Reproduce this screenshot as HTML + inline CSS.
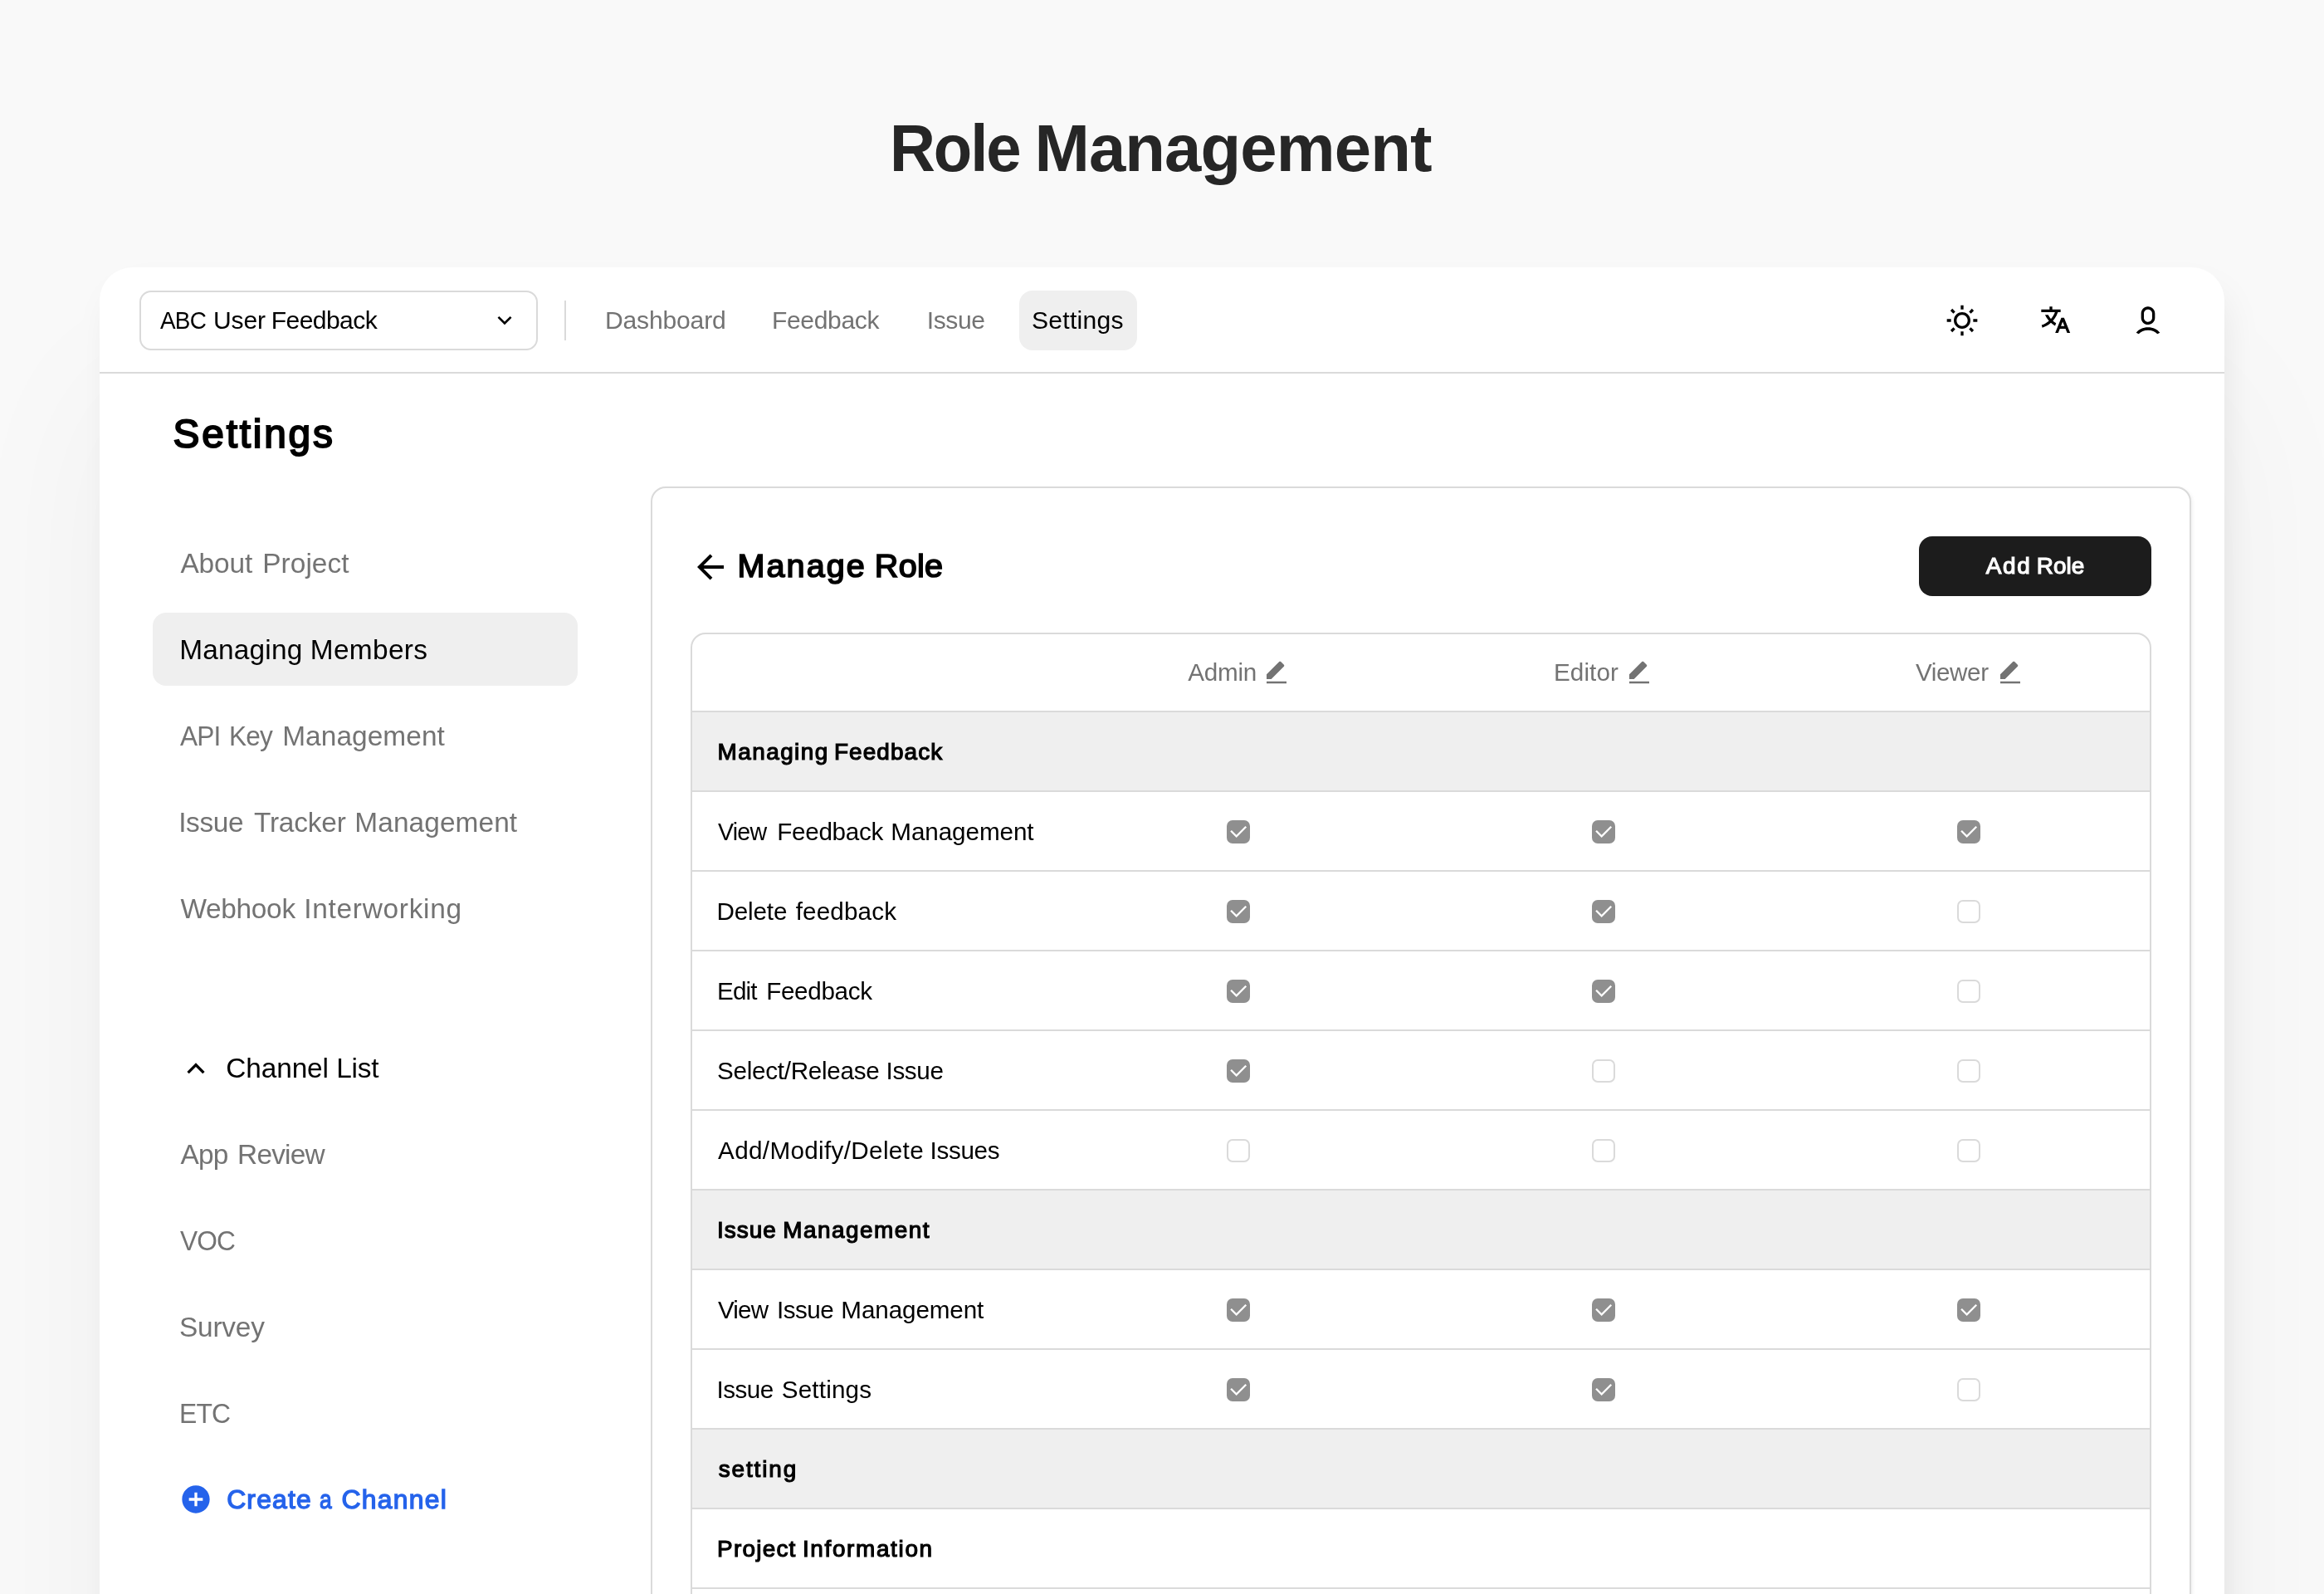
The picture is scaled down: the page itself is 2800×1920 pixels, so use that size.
<!DOCTYPE html>
<html lang="en"><head><meta charset="utf-8"><title>Role Management</title>
<style>
html,body{margin:0;padding:0}
body{width:2800px;height:1920px;overflow:hidden;background:#f9f9f9;font-family:"Liberation Sans",sans-serif;position:relative;color:#000}
#root{position:absolute;left:0;top:0;width:2800px;height:1920px;overflow:hidden;will-change:transform}
.t{position:absolute;transform-origin:0 0;white-space:nowrap;line-height:1;margin:0;padding:0;display:block}
.g{margin:0;padding:0;font-size:0;font-weight:normal;display:block}
.ic{position:absolute;display:block}
.abs{position:absolute;box-sizing:border-box}
.card{left:120px;top:322px;width:2560px;height:1700px;background:#fff;border-radius:40px 40px 0 0;box-shadow:8px 24px 50px -12px rgba(0,0,0,.10),0 140px 200px rgba(0,0,0,.045)}
.navline{left:120px;top:448px;width:2560px;height:2px;background:#dadada}
.select{left:168px;top:350px;width:480px;height:72px;border:2px solid #dadada;border-radius:14px;background:#fff}
.vdiv{left:680px;top:362px;width:2px;height:48px;background:#dadada}
.pill{background:#efefef;border-radius:16px}
.panel{left:784px;top:586px;width:1856px;height:1500px;border:2px solid #dadada;border-radius:18px;background:#fff;box-shadow:2px 2px 4px rgba(0,0,0,.055)}
.btn{left:2312px;top:646px;width:280px;height:72px;border-radius:16px;background:#1c1c1c}
.table{left:832px;top:762px;width:1760px;height:1400px;border:2px solid #dadada;border-radius:18px;background:#fff;overflow:hidden}
.hl{left:834px;width:1756px;height:2px;background:#dadada}
.band{left:834px;width:1756px;height:94px;background:#efefef}
.cb{position:absolute;width:28px;height:28px;box-sizing:border-box;border-radius:7px}
.cb.off{border:2px solid #dadada;background:#fff}
.cb.on{background:#8f8f8f}
</style></head>
<body>
<div id="root">
<h1 class="g"><span class="t" id="title_0" style="left:1071.82px;top:139.18px;font-size:79.65px;letter-spacing:-2.230px;font-weight:bold;color:#262626;transform:scaleX(0.9552);">Role</span> <span class="t" id="title_1" style="left:1246.40px;top:139.18px;font-size:79.65px;letter-spacing:-0.852px;font-weight:bold;color:#262626;">Management</span></h1>
<main class="abs card"></main>
<nav>
<div class="abs select"></div>
<span class="g"><span class="t" id="sel_0" style="left:192.70px;top:370.73px;font-size:30.09px;letter-spacing:-0.842px;font-weight:normal;color:#000;transform:scaleX(0.927);">ABC</span> <span class="t" id="sel_1" style="left:257.00px;top:370.73px;font-size:30.09px;letter-spacing:-0.130px;font-weight:normal;color:#000;">User</span> <span class="t" id="sel_2" style="left:326.70px;top:370.73px;font-size:30.09px;letter-spacing:-0.579px;font-weight:normal;color:#000;">Feedback</span></span>
<svg class="ic" style="left:592px;top:370px" width="32" height="32" viewBox="0 0 24 24" fill="#000" ><path d="M11.9999 13.1714L16.9497 8.22168L18.3639 9.63589L11.9999 15.9999L5.63599 9.63589L7.0502 8.22168L11.9999 13.1714Z"/></svg>
<div class="abs vdiv"></div>
<span class="g"><span class="t" id="nav1_0" style="left:729.00px;top:370.73px;font-size:30.09px;letter-spacing:-0.177px;font-weight:normal;color:#737373;">Dashboard</span></span>
<span class="g"><span class="t" id="nav2_0" style="left:930.00px;top:370.73px;font-size:30.09px;letter-spacing:-0.365px;font-weight:normal;color:#737373;">Feedback</span></span>
<span class="g"><span class="t" id="nav3_0" style="left:1116.70px;top:370.73px;font-size:30.09px;letter-spacing:-0.391px;font-weight:normal;color:#737373;">Issue</span></span>
<div class="abs pill" style="left:1228px;top:350px;width:142px;height:72px"></div>
<span class="g"><span class="t" id="nav4_0" style="left:1243.00px;top:370.73px;font-size:30.09px;letter-spacing:0.265px;font-weight:normal;color:#000;">Settings</span></span>
<svg class="ic" style="left:2344px;top:366px" width="40" height="40" viewBox="0 0 24 24" fill="#000" ><path d="M12 18C8.68629 18 6 15.3137 6 12C6 8.68629 8.68629 6 12 6C15.3137 6 18 8.68629 18 12C18 15.3137 15.3137 18 12 18ZM12 16C14.2091 16 16 14.2091 16 12C16 9.79086 14.2091 8 12 8C9.79086 8 8 9.79086 8 12C8 14.2091 9.79086 16 12 16ZM11 1H13V4H11V1ZM11 20H13V23H11V20ZM3.51472 4.92893L4.92893 3.51472L7.05025 5.63604L5.63604 7.05025L3.51472 4.92893ZM16.9497 18.364L18.364 16.9497L20.4853 19.0711L19.0711 20.4853L16.9497 18.364ZM19.0711 3.51472L20.4853 4.92893L18.364 7.05025L16.9497 5.63604L19.0711 3.51472ZM5.63604 16.9497L7.05025 18.364L4.92893 20.4853L3.51472 19.0711L5.63604 16.9497ZM23 11V13H20V11H23ZM4 11V13H1V11H4Z"/></svg>
<svg class="ic" style="left:2456px;top:366px" width="40" height="40" viewBox="0 0 24 24" fill="#000" ><path d="M18.5 10L22.9 21H20.745L19.544 18H15.454L14.255 21H12.101L16.5 10H18.5ZM10 2V4H16V6L14.0322 6.0006C13.2425 8.36616 11.9988 10.5057 10.4115 12.301C11.1344 12.9457 11.917 13.5176 12.7475 14.0079L11.9969 15.8855C10.9237 15.2781 9.91944 14.5524 8.99961 13.7249C7.21403 15.332 5.10914 16.5553 2.79891 17.2734L2.26257 15.3442C4.2385 14.7203 6.04543 13.6737 7.59042 12.3021C6.46277 11.0281 5.50873 9.57985 4.76742 8.00028L7.00684 8.00037C7.57018 9.03885 8.23979 10.0033 8.99967 10.877C10.2283 9.46508 11.2205 7.81616 11.9095 6.00101L2 6V4H8V2H10ZM17.5 12.8852L16.253 16H18.745L17.5 12.8852Z"/></svg>
<svg class="ic" style="left:2568px;top:366px" width="40" height="40" viewBox="0 0 24 24" fill="#000" ><path d="M12 17C15.6622 17 18.8649 18.5751 20.6069 20.9247L18.765 21.796C17.3473 20.1157 14.8473 19 12 19C9.15267 19 6.65271 20.1157 5.23501 21.796L3.39404 20.9238C5.13605 18.5747 8.33846 17 12 17ZM12 2C14.7614 2 17 4.23858 17 7V10C17 12.6888 14.8777 14.8818 12.2169 14.9954L12 15C9.23858 15 7 12.7614 7 10V7C7 4.31125 9.12231 2.11818 11.7831 2.00462L12 2ZM12 4C10.4023 4 9.09634 5.24892 9.00509 6.82373L9 7V10C9 11.6569 10.3431 13 12 13C13.5977 13 14.9037 11.7511 14.9949 10.1763L15 10V7C15 5.34315 13.6569 4 12 4Z"/></svg>
<div class="abs navline"></div>
</nav>
<aside>
<h2 class="g"><span class="t" id="h2_0" style="left:208.62px;top:498.55px;font-size:47.76px;letter-spacing:2.814px;font-weight:normal;color:#000;-webkit-text-stroke:2.04px #000;">Settings</span></h2>
<span class="g"><span class="t" id="s1_0" style="left:217.40px;top:661.70px;font-size:33.43px;letter-spacing:-0.139px;font-weight:normal;color:#737373;">About</span> <span class="t" id="s1_1" style="left:316.20px;top:661.70px;font-size:33.43px;letter-spacing:0.061px;font-weight:normal;color:#737373;">Project</span></span>
<div class="abs pill" style="left:184px;top:738px;width:512px;height:88px"></div>
<span class="g"><span class="t" id="s2_0" style="left:216.20px;top:765.70px;font-size:33.43px;letter-spacing:0.185px;font-weight:normal;color:#000;">Managing</span> <span class="t" id="s2_1" style="left:373.80px;top:765.70px;font-size:33.43px;letter-spacing:0.321px;font-weight:normal;color:#000;">Members</span></span>
<span class="g"><span class="t" id="s3_0" style="left:217.40px;top:869.70px;font-size:33.43px;letter-spacing:-0.936px;font-weight:normal;color:#737373;transform:scaleX(0.9454);">API</span> <span class="t" id="s3_1" style="left:275.71px;top:869.70px;font-size:33.43px;letter-spacing:-0.936px;font-weight:normal;color:#737373;transform:scaleX(0.9462);">Key</span> <span class="t" id="s3_2" style="left:340.20px;top:869.70px;font-size:33.43px;letter-spacing:0.067px;font-weight:normal;color:#737373;">Management</span></span>
<span class="g"><span class="t" id="s4_0" style="left:215.20px;top:973.70px;font-size:33.43px;letter-spacing:-0.349px;font-weight:normal;color:#737373;">Issue</span> <span class="t" id="s4_1" style="left:305.90px;top:973.70px;font-size:33.43px;letter-spacing:-0.167px;font-weight:normal;color:#737373;">Tracker</span> <span class="t" id="s4_2" style="left:427.30px;top:973.70px;font-size:33.43px;letter-spacing:0.078px;font-weight:normal;color:#737373;">Management</span></span>
<span class="g"><span class="t" id="s5_0" style="left:217.40px;top:1077.70px;font-size:33.43px;letter-spacing:-0.313px;font-weight:normal;color:#737373;">Webhook</span> <span class="t" id="s5_1" style="left:366.30px;top:1077.70px;font-size:33.43px;letter-spacing:0.704px;font-weight:normal;color:#737373;">Interworking</span></span>
<svg class="ic" style="left:216px;top:1266.5px" width="40" height="40" viewBox="0 0 24 24" fill="#000" ><path d="M11.9999 10.8284L7.0502 15.7782L5.63599 14.364L11.9999 8L18.3639 14.364L16.9497 15.7782L11.9999 10.8284Z"/></svg>
<span class="g"><span class="t" id="c0_0" style="left:272.20px;top:1269.50px;font-size:33.43px;letter-spacing:-0.112px;font-weight:normal;color:#000;">Channel</span> <span class="t" id="c0_1" style="left:405.20px;top:1269.50px;font-size:33.43px;letter-spacing:-0.208px;font-weight:normal;color:#000;">List</span></span>
<span class="g"><span class="t" id="c1_0" style="left:217.40px;top:1373.70px;font-size:33.43px;letter-spacing:-0.740px;font-weight:normal;color:#737373;">App</span> <span class="t" id="c1_1" style="left:286.10px;top:1373.70px;font-size:33.43px;letter-spacing:-0.830px;font-weight:normal;color:#737373;">Review</span></span>
<span class="g"><span class="t" id="c2_0" style="left:217.00px;top:1477.50px;font-size:33.43px;letter-spacing:-0.936px;font-weight:normal;color:#737373;transform:scaleX(0.9479);">VOC</span></span>
<span class="g"><span class="t" id="c3_0" style="left:216.00px;top:1581.70px;font-size:33.43px;letter-spacing:-0.222px;font-weight:normal;color:#737373;">Survey</span></span>
<span class="g"><span class="t" id="c4_0" style="left:215.89px;top:1686.10px;font-size:33.43px;letter-spacing:-0.936px;font-weight:normal;color:#737373;transform:scaleX(0.9541);">ETC</span></span>
<svg class="ic" style="left:216px;top:1786px" width="40" height="40" viewBox="0 0 24 24" fill="#2563eb" ><path d="M12 22C6.47715 22 2 17.5228 2 12C2 6.47715 6.47715 2 12 2C17.5228 2 22 6.47715 22 12C22 17.5228 17.5228 22 12 22ZM11 11H7V13H11V17H13V13H17V11H13V7H11V11Z"/></svg>
<span class="g"><span class="t" id="c5_0" style="left:273.18px;top:1790.93px;font-size:31.89px;letter-spacing:1.179px;font-weight:normal;color:#2563eb;-webkit-text-stroke:1.36px #2563eb;">Create</span> <span class="t" id="c5_1" style="left:384.85px;top:1790.93px;font-size:31.89px;letter-spacing:0.000px;font-weight:normal;color:#2563eb;-webkit-text-stroke:1.36px #2563eb;transform:scaleX(0.8259);">a</span> <span class="t" id="c5_2" style="left:411.58px;top:1790.93px;font-size:31.89px;letter-spacing:1.247px;font-weight:normal;color:#2563eb;-webkit-text-stroke:1.36px #2563eb;">Channel</span></span>
</aside>
<section>
<div class="abs panel"></div>
<svg class="ic" style="left:832px;top:658.5px" width="48" height="48" viewBox="0 0 24 24" fill="#000" ><path d="M7.82843 10.9999H20V12.9999H7.82843L13.1924 18.3638L11.7782 19.778L4 11.9999L11.7782 4.22168L13.1924 5.63589L7.82843 10.9999Z"/></svg>
<h3 class="g"><span class="t" id="mr_0" style="left:888.55px;top:661.58px;font-size:39.55px;letter-spacing:2.068px;font-weight:normal;color:#000;-webkit-text-stroke:1.69px #000;">Manage</span> <span class="t" id="mr_1" style="left:1053.85px;top:661.58px;font-size:39.55px;letter-spacing:0.298px;font-weight:normal;color:#000;-webkit-text-stroke:1.69px #000;">Role</span></h3>
<div class="abs btn"></div>
<span class="g"><span class="t" id="add_0" style="left:2392.69px;top:668.37px;font-size:27.92px;letter-spacing:1.738px;font-weight:normal;color:#fff;-webkit-text-stroke:1.19px #fff;">Add</span> <span class="t" id="add_1" style="left:2453.79px;top:668.37px;font-size:27.92px;letter-spacing:0.046px;font-weight:normal;color:#fff;-webkit-text-stroke:1.19px #fff;">Role</span></span>
<div class="abs table"></div>
<span class="g"><span class="t" id="th1_0" style="left:1431.30px;top:794.60px;font-size:29.65px;letter-spacing:-0.283px;font-weight:normal;color:#737373;">Admin</span></span>
<svg class="ic" style="left:1522px;top:794px" width="32" height="32" viewBox="0 0 24 24" fill="#737373" ><path d="M7.24264 17.9967H3V13.754L14.435 2.319C14.8256 1.92848 15.4587 1.92848 15.8492 2.319L18.6777 5.14743C19.0682 5.53795 19.0682 6.17112 18.6777 6.56164L7.24264 17.9967ZM3 19.9967H21V21.9967H3V19.9967Z"/></svg>
<span class="g"><span class="t" id="th2_0" style="left:1872.00px;top:794.60px;font-size:29.65px;letter-spacing:0.088px;font-weight:normal;color:#737373;">Editor</span></span>
<svg class="ic" style="left:1958.7px;top:794px" width="32" height="32" viewBox="0 0 24 24" fill="#737373" ><path d="M7.24264 17.9967H3V13.754L14.435 2.319C14.8256 1.92848 15.4587 1.92848 15.8492 2.319L18.6777 5.14743C19.0682 5.53795 19.0682 6.17112 18.6777 6.56164L7.24264 17.9967ZM3 19.9967H21V21.9967H3V19.9967Z"/></svg>
<span class="g"><span class="t" id="th3_0" style="left:2308.00px;top:794.60px;font-size:29.65px;letter-spacing:-0.399px;font-weight:normal;color:#737373;">Viewer</span></span>
<svg class="ic" style="left:2406px;top:794px" width="32" height="32" viewBox="0 0 24 24" fill="#737373" ><path d="M7.24264 17.9967H3V13.754L14.435 2.319C14.8256 1.92848 15.4587 1.92848 15.8492 2.319L18.6777 5.14743C19.0682 5.53795 19.0682 6.17112 18.6777 6.56164L7.24264 17.9967ZM3 19.9967H21V21.9967H3V19.9967Z"/></svg>
<div class="abs band" style="top:858px"></div>
<div class="abs band" style="top:1434px"></div>
<div class="abs band" style="top:1722px"></div>
<div class="abs hl" style="top:856px"></div>
<div class="abs hl" style="top:952px"></div>
<div class="abs hl" style="top:1048px"></div>
<div class="abs hl" style="top:1144px"></div>
<div class="abs hl" style="top:1240px"></div>
<div class="abs hl" style="top:1336px"></div>
<div class="abs hl" style="top:1432px"></div>
<div class="abs hl" style="top:1528px"></div>
<div class="abs hl" style="top:1624px"></div>
<div class="abs hl" style="top:1720px"></div>
<div class="abs hl" style="top:1816px"></div>
<div class="abs hl" style="top:1912px"></div>
<span class="g"><span class="t" id="r0_0" style="left:864.60px;top:891.57px;font-size:27.92px;letter-spacing:1.438px;font-weight:normal;color:#000;-webkit-text-stroke:1.19px #000;">Managing</span> <span class="t" id="r0_1" style="left:1004.89px;top:891.57px;font-size:27.92px;letter-spacing:1.101px;font-weight:normal;color:#000;-webkit-text-stroke:1.19px #000;">Feedback</span></span>
<span class="g"><span class="t" id="r1_0" style="left:865.10px;top:987.30px;font-size:29.65px;letter-spacing:-0.830px;font-weight:normal;color:#000;transform:scaleX(0.9642);">View</span> <span class="t" id="r1_1" style="left:936.20px;top:987.30px;font-size:29.65px;letter-spacing:-0.293px;font-weight:normal;color:#000;">Feedback</span> <span class="t" id="r1_2" style="left:1073.30px;top:987.30px;font-size:29.65px;letter-spacing:-0.086px;font-weight:normal;color:#000;">Management</span></span>
<span class="g"><span class="t" id="r2_0" style="left:863.50px;top:1083.10px;font-size:29.65px;letter-spacing:-0.159px;font-weight:normal;color:#000;">Delete</span> <span class="t" id="r2_1" style="left:958.70px;top:1083.10px;font-size:29.65px;letter-spacing:0.146px;font-weight:normal;color:#000;">feedback</span></span>
<span class="g"><span class="t" id="r3_0" style="left:864.10px;top:1179.10px;font-size:29.65px;letter-spacing:-0.830px;font-weight:normal;color:#000;transform:scaleX(0.999);">Edit</span> <span class="t" id="r3_1" style="left:923.20px;top:1179.10px;font-size:29.65px;letter-spacing:-0.336px;font-weight:normal;color:#000;">Feedback</span></span>
<span class="g"><span class="t" id="r4_0" style="left:864.10px;top:1275.10px;font-size:29.65px;letter-spacing:-0.291px;font-weight:normal;color:#000;">Select/Release</span> <span class="t" id="r4_1" style="left:1067.60px;top:1275.10px;font-size:29.65px;letter-spacing:-0.390px;font-weight:normal;color:#000;">Issue</span></span>
<span class="g"><span class="t" id="r5_0" style="left:865.10px;top:1371.10px;font-size:29.65px;letter-spacing:0.337px;font-weight:normal;color:#000;">Add/Modify/Delete</span> <span class="t" id="r5_1" style="left:1120.60px;top:1371.10px;font-size:29.65px;letter-spacing:-0.349px;font-weight:normal;color:#000;">Issues</span></span>
<span class="g"><span class="t" id="r6_0" style="left:864.10px;top:1467.77px;font-size:27.92px;letter-spacing:0.983px;font-weight:normal;color:#000;-webkit-text-stroke:1.19px #000;">Issue</span> <span class="t" id="r6_1" style="left:943.30px;top:1467.77px;font-size:27.92px;letter-spacing:1.486px;font-weight:normal;color:#000;-webkit-text-stroke:1.19px #000;">Management</span></span>
<span class="g"><span class="t" id="r7_0" style="left:865.10px;top:1563.20px;font-size:29.65px;letter-spacing:-0.830px;font-weight:normal;color:#000;transform:scaleX(0.9965);">View</span> <span class="t" id="r7_1" style="left:936.00px;top:1563.20px;font-size:29.65px;letter-spacing:-0.515px;font-weight:normal;color:#000;">Issue</span> <span class="t" id="r7_2" style="left:1013.30px;top:1563.20px;font-size:29.65px;letter-spacing:-0.108px;font-weight:normal;color:#000;">Management</span></span>
<span class="g"><span class="t" id="r8_0" style="left:863.50px;top:1659.20px;font-size:29.65px;letter-spacing:-0.515px;font-weight:normal;color:#000;">Issue</span> <span class="t" id="r8_1" style="left:941.80px;top:1659.20px;font-size:29.65px;letter-spacing:0.160px;font-weight:normal;color:#000;">Settings</span></span>
<span class="g"><span class="t" id="r9_0" style="left:865.70px;top:1755.67px;font-size:27.92px;letter-spacing:1.885px;font-weight:normal;color:#000;-webkit-text-stroke:1.19px #000;">setting</span></span>
<span class="g"><span class="t" id="r10_0" style="left:864.10px;top:1851.67px;font-size:27.92px;letter-spacing:1.235px;font-weight:normal;color:#000;-webkit-text-stroke:1.19px #000;">Project</span> <span class="t" id="r10_1" style="left:966.89px;top:1851.67px;font-size:27.92px;letter-spacing:1.663px;font-weight:normal;color:#000;-webkit-text-stroke:1.19px #000;">Information</span></span>
<div class="cb on" style="left:1478px;top:988px"><svg width="28" height="28" viewBox="0 0 24 24" style="display:block" fill="#fff"><path d="M9.9997 15.1709L19.1921 5.97852L20.6063 7.39273L9.9997 17.9993L3.63574 11.6354L5.04996 10.2212L9.9997 15.1709Z"/></svg></div>
<div class="cb on" style="left:1918px;top:988px"><svg width="28" height="28" viewBox="0 0 24 24" style="display:block" fill="#fff"><path d="M9.9997 15.1709L19.1921 5.97852L20.6063 7.39273L9.9997 17.9993L3.63574 11.6354L5.04996 10.2212L9.9997 15.1709Z"/></svg></div>
<div class="cb on" style="left:2358px;top:988px"><svg width="28" height="28" viewBox="0 0 24 24" style="display:block" fill="#fff"><path d="M9.9997 15.1709L19.1921 5.97852L20.6063 7.39273L9.9997 17.9993L3.63574 11.6354L5.04996 10.2212L9.9997 15.1709Z"/></svg></div>
<div class="cb on" style="left:1478px;top:1084px"><svg width="28" height="28" viewBox="0 0 24 24" style="display:block" fill="#fff"><path d="M9.9997 15.1709L19.1921 5.97852L20.6063 7.39273L9.9997 17.9993L3.63574 11.6354L5.04996 10.2212L9.9997 15.1709Z"/></svg></div>
<div class="cb on" style="left:1918px;top:1084px"><svg width="28" height="28" viewBox="0 0 24 24" style="display:block" fill="#fff"><path d="M9.9997 15.1709L19.1921 5.97852L20.6063 7.39273L9.9997 17.9993L3.63574 11.6354L5.04996 10.2212L9.9997 15.1709Z"/></svg></div>
<div class="cb off" style="left:2358px;top:1084px"></div>
<div class="cb on" style="left:1478px;top:1180px"><svg width="28" height="28" viewBox="0 0 24 24" style="display:block" fill="#fff"><path d="M9.9997 15.1709L19.1921 5.97852L20.6063 7.39273L9.9997 17.9993L3.63574 11.6354L5.04996 10.2212L9.9997 15.1709Z"/></svg></div>
<div class="cb on" style="left:1918px;top:1180px"><svg width="28" height="28" viewBox="0 0 24 24" style="display:block" fill="#fff"><path d="M9.9997 15.1709L19.1921 5.97852L20.6063 7.39273L9.9997 17.9993L3.63574 11.6354L5.04996 10.2212L9.9997 15.1709Z"/></svg></div>
<div class="cb off" style="left:2358px;top:1180px"></div>
<div class="cb on" style="left:1478px;top:1276px"><svg width="28" height="28" viewBox="0 0 24 24" style="display:block" fill="#fff"><path d="M9.9997 15.1709L19.1921 5.97852L20.6063 7.39273L9.9997 17.9993L3.63574 11.6354L5.04996 10.2212L9.9997 15.1709Z"/></svg></div>
<div class="cb off" style="left:1918px;top:1276px"></div>
<div class="cb off" style="left:2358px;top:1276px"></div>
<div class="cb off" style="left:1478px;top:1372px"></div>
<div class="cb off" style="left:1918px;top:1372px"></div>
<div class="cb off" style="left:2358px;top:1372px"></div>
<div class="cb on" style="left:1478px;top:1564px"><svg width="28" height="28" viewBox="0 0 24 24" style="display:block" fill="#fff"><path d="M9.9997 15.1709L19.1921 5.97852L20.6063 7.39273L9.9997 17.9993L3.63574 11.6354L5.04996 10.2212L9.9997 15.1709Z"/></svg></div>
<div class="cb on" style="left:1918px;top:1564px"><svg width="28" height="28" viewBox="0 0 24 24" style="display:block" fill="#fff"><path d="M9.9997 15.1709L19.1921 5.97852L20.6063 7.39273L9.9997 17.9993L3.63574 11.6354L5.04996 10.2212L9.9997 15.1709Z"/></svg></div>
<div class="cb on" style="left:2358px;top:1564px"><svg width="28" height="28" viewBox="0 0 24 24" style="display:block" fill="#fff"><path d="M9.9997 15.1709L19.1921 5.97852L20.6063 7.39273L9.9997 17.9993L3.63574 11.6354L5.04996 10.2212L9.9997 15.1709Z"/></svg></div>
<div class="cb on" style="left:1478px;top:1660px"><svg width="28" height="28" viewBox="0 0 24 24" style="display:block" fill="#fff"><path d="M9.9997 15.1709L19.1921 5.97852L20.6063 7.39273L9.9997 17.9993L3.63574 11.6354L5.04996 10.2212L9.9997 15.1709Z"/></svg></div>
<div class="cb on" style="left:1918px;top:1660px"><svg width="28" height="28" viewBox="0 0 24 24" style="display:block" fill="#fff"><path d="M9.9997 15.1709L19.1921 5.97852L20.6063 7.39273L9.9997 17.9993L3.63574 11.6354L5.04996 10.2212L9.9997 15.1709Z"/></svg></div>
<div class="cb off" style="left:2358px;top:1660px"></div>
</section>
</div>
</body></html>
